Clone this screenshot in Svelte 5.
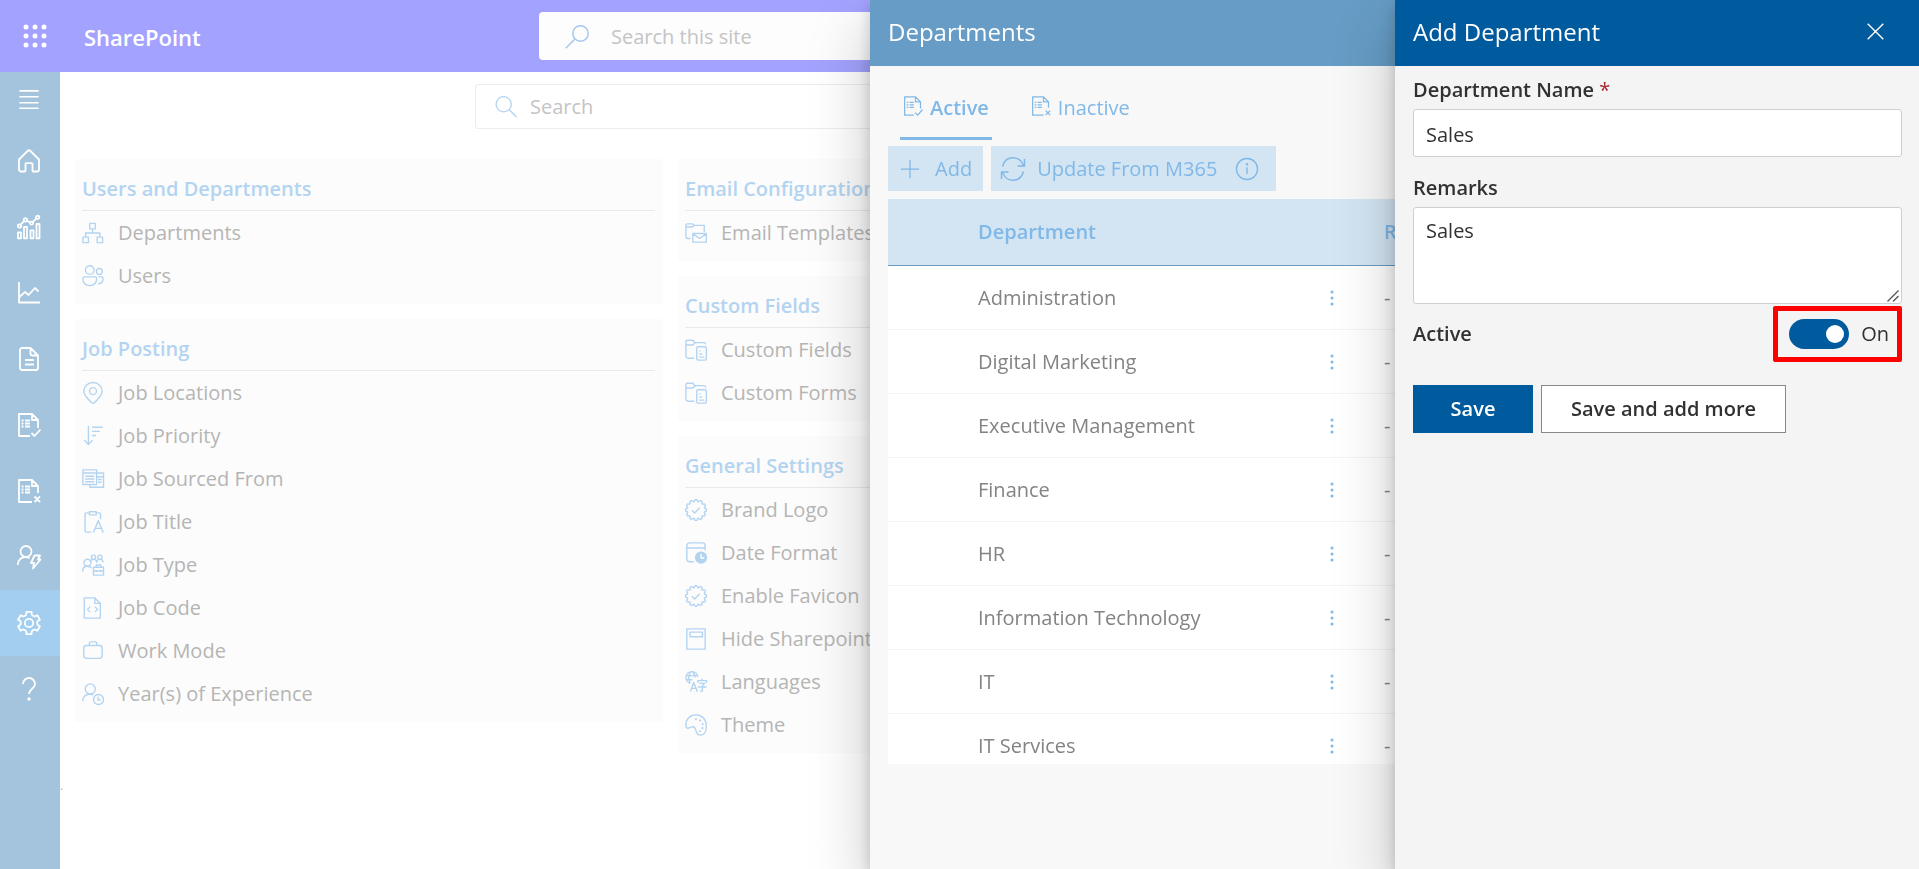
<script>
  // Closed outline through points repeated around the centre of a 24 by 24 box.
  const ring = (count, points) => {
    const out = [];
    for (let k = 0; k < count; k++) {
      for (const [radius, degrees] of points) {
        const a = ((degrees + (360 / count) * k - 90) * Math.PI) / 180;
        out.push(`${(12 + radius * Math.cos(a)).toFixed(2)} ${(12 + radius * Math.sin(a)).toFixed(2)}`);
      }
    }
    return `M${out.join('L')}Z`;
  };
  const badgeEdge = ring(12, [[11.4, -5], [11.4, 5], [9.5, 12], [9.5, 18]]);
  const gearEdge = ring(6, [[11.4, -13], [11.4, 13], [8.6, 19], [8.2, 30], [8.6, 41]]);

  const svgs = {
    menu: '<path d="M1.500 2h21M1.500 8.500h21M1.500 15h21M1.500 21h21"/>',
    home: '<path d="M2 10.500L10.600 2a2 2 0 0 1 2.800 0L22 10.500V20.500a2 2 0 0 1-2 2h-3.500a1 1 0 0 1-1-1V15a.8.8 0 0 0-.8-.8H9.300a.8.8 0 0 0-.8.8v6.500a1 1 0 0 1-1 1H4a2 2 0 0 1-2-2z"/>',
    stats: '<path d="M1 23.300v-6h3v6zM7 23.300V12h3v11.300zM13.500 23.300v-8h3v8zM19.500 23.300V9h3v14.300zM3.600 9.600l3.500-3.500M9.800 5.600l3.600 2M15.800 7l3.800-3.800"/><circle cx="2.500" cy="11" r="1.700"/><circle cx="8.400" cy="4.900" r="1.700"/><circle cx="14.600" cy="8.200" r="1.500"/><circle cx="20.700" cy="2.200" r="1.600"/>',
    line: '<path d="M2 1v20.500h21M2.500 16l5.500-5 3.500 3 6.500-7 3.500 3.500"/>',
    doc: '<path d="M5 1h8.500L21 8.500v12.500a2 2 0 0 1-2 2H5a2 2 0 0 1-2-2V3a2 2 0 0 1 2-2zM13.500 1v5.500a2 2 0 0 0 2 2H21M8 13h9M8 17.500h9"/>',
    docCheck: '<path d="M13 23H2V1h13l6 6v8M15 1v6h6M4.500 7.500h2M8 7.500h5M4.500 10.500h2M8 10.500h5M4.500 13.500h2M8 13.500h5M14.500 20l3 3 6-6.500"/>',
    docX: '<path d="M15 23H2V1h13l6 6v7M15 1v6h6M4.500 7.500h2M8 7.500h5M4.500 10.500h2M8 10.500h5M4.500 13.500h2M8 13.500h5M17.500 17.500l5.500 5.500M23 17.500L17.500 23"/>',
    bolt: '<circle cx="9" cy="6.500" r="5.500"/><path d="M.7 20c0-5 3.500-8 7.800-8 1.500 0 3 .5 4 1.200M17.500 10.500h5.500l-2 4h2.500l-7.500 9 1-5.500h-3z"/>',
    gear: `<path d="${gearEdge}"/><circle cx="12" cy="12" r="4.200"/>`,
    help: '<path d="M6 7a6 6 0 0 1 12 0c0 4.500-6 5-6 10"/><circle cx="12" cy="22" r=".8" fill="currentColor"/>',
    org: '<path d="M8.500 1.500h6v6h-6zM1 16.500h6v6H1zM16.500 16.500h6v6h-6zM11.500 7.500v4.500M4 16.500V12h15.500v4.500"/>',
    users: '<circle cx="8.500" cy="5.500" r="4.700"/><circle cx="19" cy="7" r="3.200"/><path d="M2.500 13h12a1.500 1.500 0 0 1 1.500 1.500c0 5-3 8-7.500 8S1 19.500 1 14.500A1.500 1.500 0 0 1 2.500 13zM18 13h3.500a1.500 1.500 0 0 1 1.500 1.500c0 3.500-2 6-5.500 6"/>',
    pin: '<path d="M12 23.300c-1 0-10-8-10-13.500a10 9.300 0 0 1 20 0c0 5.500-9 13.500-10 13.500z"/><circle cx="12" cy="10" r="3.800"/>',
    sort: '<path d="M7 1v20M2.500 16.500l4.500 4.800 4.500-4.800M11 2.500h11.500M11 7h8.500M11 11.500h4.500"/>',
    source: '<path d="M1 2h15v16H1zM1 5.500h15M3.500 9h10M3.500 12h10M3.500 15h10M16 5.500h7.500V21H8.500v-3M16 9.500h7M17.500 12.500h4M17.500 15.500h4"/>',
    title: '<path d="M7 2H5a1.700 1.700 0 0 0-1.700 1.700v17.600A1.700 1.700 0 0 0 5 23h5M16 2h2.500a1.700 1.700 0 0 1 1.700 1.700V9M8 .8h7.500v3.400H8zM12.500 23.500l5.300-13 5.300 13M14.500 19h6.700"/>',
    type: '<circle cx="6" cy="9.500" r="3.800"/><circle cx="12.500" cy="3.500" r="2.300"/><circle cx="19.500" cy="3.500" r="2.300"/><path d="M.7 19c0-3.500 2-5.700 5-5.700 2 0 3.500.7 4.500 2.200M9 9c.5-2 1.700-3.200 3.500-3.200S16 7 16 9c0-2 1.500-3.200 3.500-3.200S23 7 23 9M12.500 14.500h11v8.500h-11zM15.500 14.500V12h5v2.500M12.500 18.500h11M15.500 17.500v2.500M20.500 17.500v2.500"/>',
    code: '<path d="M2.500 1H14l6 6v16H2.500zM14 1v6h6M9 10.500L6 13.500l3 3M14 10.500l3 3-3 3"/>',
    case: '<rect x="2" y="6" width="20" height="14" rx="3"/><path d="M8 6V3.500A1.500 1.500 0 0 1 9.500 2h5A1.500 1.500 0 0 1 16 3.500V6"/>',
    years: '<circle cx="9" cy="6.500" r="5.500"/><path d="M.7 19.500c0-4.500 3.500-7.500 7.800-7.500 1.500 0 2.600.4 3.700 1"/><circle cx="18" cy="18" r="5.500"/><path d="M17.500 15v3.500h3"/>',
    mail: '<path d="M6 18H3a2 2 0 0 1-2-2V3.500A1.500 1.500 0 0 1 2.500 2H8l2 1.700h11V11M1 5.500h7l2-1.800M8.500 12.500H23.300v9.500H8.500zM8.500 13l7.500 5 7-5"/>',
    form: '<path d="M10 21H3.500A2.500 2.500 0 0 1 1 18.500V3a1.700 1.700 0 0 1 1.700-1.700H8.500L11 4h9.500A2 2 0 0 1 22.500 6M1 6.500h7.500L11 4"/><rect x="12.800" y="8.500" width="10.500" height="14.500" rx="1.500"/><path d="M15.500 13h1.500M15.500 16.500h3.500M15.500 19.800h5.500"/>',
    badge: `<path d="${badgeEdge}"/><path d="M7.500 12.200l3 3 5.500-5.700"/>`,
    date: '<path d="M9.500 21.500H5A3 3 0 0 1 2 18.500V4A3 3 0 0 1 5 1h14a3 3 0 0 1 3 3v5M2 6.500h20"/><circle cx="17.500" cy="17" r="6.700" fill="currentColor" stroke="none"/><path d="M17.500 13v4.500h3.500" stroke="#fff"/>',
    hide: '<path d="M2 1h20v22H2zM5.500 4.500h13.500v5H5.500z"/>',
    lang: '<path d="M6 13.500A6.500 6.500 0 1 1 14 6.500M1 5h13M1 9.500h7M5.500 13c-2-4-2-8.500 1-12M8 1c2 1.500 3 3.500 3 6M6 22.500l3.500-10 4 10M7.200 19h5M14 13v-2.500h9.500v2.500M18.500 8.500v2M15.500 13.500h6l-2.500 2.500v6h-2.500M14 17.500h9.500"/>',
    theme: '<path d="M1 13C.5 6 5.500 1 12 1c6.500 0 11.300 5 11.300 12 0 6-2.500 10-6 10-3 0-4.500-1.500-5.300-4.500-.6-3-1.500-5-4-4.500C5.500 14.500 4 16 2.500 15.500 1.500 15.200 1 14.500 1 13z"/><g fill="currentColor" stroke="none"><circle cx="12" cy="5.500" r="1.200"/><circle cx="16.500" cy="7" r="1.200"/><circle cx="19.300" cy="11" r="1.200"/><circle cx="19" cy="15.500" r="1.200"/><circle cx="16.300" cy="18.800" r="1.200"/></g>',
    search: '<circle cx="9.500" cy="9" r="8.300"/><path d="M15.500 15l8 8"/>',
    searchLeft: '<circle cx="15.500" cy="8.500" r="7.700"/><path d="M10 14L.7 23.300"/>',
    plus: '<path d="M12 1v22M1 12h22"/>',
    sync: '<path d="M1.500 9.500C3 4 7 .8 12 .8c4 0 7.500 2 9.500 5.700l1 2M23.500 2v7h-7M22.500 14.500c-1.500 5.500-5.500 8.700-10.500 8.700-4 0-7.500-2-9.500-5.700l-1-2M.5 22v-7h7"/>',
    info: '<circle cx="12" cy="12" r="11.500"/><path d="M12 10v7.500"/><circle cx="12" cy="6.800" r=".6" fill="currentColor"/>',
    close: '<path d="M1 1l22 22M23 1L1 23"/>',
  };

  const nav = [
    ['home', 'Home'], ['stats', 'Dashboard'], ['line', 'Reports'], ['doc', 'Documents'],
    ['docCheck', 'Active jobs'], ['docX', 'Inactive jobs'], ['bolt', 'Candidates'],
    ['gear', 'Settings'], ['help', 'Help'],
  ];

  const columns = [
    [
      { title: 'Users and Departments', items: [['org', 'Departments'], ['users', 'Users']] },
      {
        title: 'Job Posting',
        items: [
          ['pin', 'Job Locations'], ['sort', 'Job Priority'], ['source', 'Job Sourced From'],
          ['title', 'Job Title'], ['type', 'Job Type'], ['code', 'Job Code'],
          ['case', 'Work Mode'], ['years', 'Year(s) of Experience'],
        ],
      },
    ],
    [
      { title: 'Email Configuration', items: [['mail', 'Email Templates']] },
      { title: 'Custom Fields', items: [['form', 'Custom Fields'], ['form', 'Custom Forms']] },
      {
        title: 'General Settings',
        items: [
          ['badge', 'Brand Logo'], ['date', 'Date Format'], ['badge', 'Enable Favicon'],
          ['hide', 'Hide Sharepoint'], ['lang', 'Languages'], ['theme', 'Theme'],
        ],
      },
    ],
  ];

  const departments = [
    'Administration', 'Digital Marketing', 'Executive Management', 'Finance', 'HR',
    'Information Technology', 'IT', 'IT Services',
  ];

  let name = $state('Sales');
  let remarks = $state('Sales');
  let active = $state(true);
</script>

{#snippet icon(id, cls = '')}
  <svg class="icon {cls}" viewBox="0 0 24 24" aria-hidden="true">{@html svgs[id]}</svg>
{/snippet}

<div class="shell">
  <header class="suite">
    <button class="waffle" aria-label="App launcher">
      <svg viewBox="0 0 24 24" aria-hidden="true">
        {#each [3, 12, 21] as cy}
          {#each [3, 12, 21] as cx}<circle {cx} {cy} r="2.500" />{/each}
        {/each}
      </svg>
    </button>
    <a class="brand" href="#home">SharePoint</a>
    <label class="site-search">
      {@render icon('searchLeft', 'large')}
      <input type="search" placeholder="Search this site" aria-label="Search this site" />
    </label>
  </header>

  <div class="workspace">
    <nav>
      <button class="burger" aria-label="Menu">{@render icon('menu')}</button>
      {#each nav as [id, label]}
        <a href="#{id}" aria-label={label} class:selected={id === 'gear'}>{@render icon(id, 'large')}</a>
      {/each}
    </nav>

    <main>
      <label class="search">
        {@render icon('search')}
        <input type="search" placeholder="Search" aria-label="Search" />
      </label>
      <div class="columns">
        {#each columns as cards}
          <div class="column">
            {#each cards as card}
              <section class="card">
                <h2>{card.title}</h2>
                {#each card.items as [id, label]}
                  <a href="#{id}">{@render icon(id)}{label}</a>
                {/each}
              </section>
            {/each}
          </div>
        {/each}
      </div>
      <footer>.</footer>
    </main>
  </div>
</div>

<section class="panel departments" aria-label="Departments">
  <div class="panel-head"><h1>Departments</h1></div>
  <div class="list">
    <div class="tabs" role="tablist">
      <button role="tab" aria-selected="true" class="current">{@render icon('docCheck', 'small')}Active</button>
      <button role="tab" aria-selected="false">{@render icon('docX', 'small')}Inactive</button>
    </div>
    <div class="commands">
      <button class="add">{@render icon('plus', 'small')}Add</button>
      <button class="update">{@render icon('sync', 'large')}Update From M365{@render icon('info', 'note')}</button>
    </div>
    <div class="scroller">
      <table>
        <thead>
          <tr><th class="check"></th><th class="name">Department</th><th class="more"></th><th>Remarks</th></tr>
        </thead>
        <tbody>
          {#each departments as department}
            <tr>
              <td></td>
              <td>{department}</td>
              <td>
                <button class="dots" aria-label="More actions">
                  <svg viewBox="0 0 4 16" aria-hidden="true"><circle cx="2" cy="2" r="1.500" /><circle cx="2" cy="8" r="1.500" /><circle cx="2" cy="14" r="1.500" /></svg>
                </button>
              </td>
              <td>-</td>
            </tr>
          {/each}
        </tbody>
      </table>
    </div>
  </div>
</section>

<section class="panel editor" aria-label="Add Department">
  <div class="panel-head">
    <h1>Add Department</h1>
    <button class="close" aria-label="Close">{@render icon('close', 'tiny')}</button>
  </div>
  <form onsubmit={(e) => e.preventDefault()}>
    <div class="field">
      <label for="name">Department Name <span>*</span></label>
      <input id="name" type="text" bind:value={name} />
    </div>
    <div class="field remarks">
      <label for="remarks">Remarks</label>
      <div class="area">
        <textarea id="remarks" bind:value={remarks}></textarea>
        <svg viewBox="0 0 12 12" aria-hidden="true"><path d="M.5 11.500l11-11M6 11.500L11.500 6" /></svg>
      </div>
    </div>
    <div class="status">
      <label for="active">Active</label>
      <div class="switch">
        <input id="active" type="checkbox" role="switch" bind:checked={active} />
        <span>{active ? 'On' : 'Off'}</span>
      </div>
    </div>
    <div class="actions">
      <button class="primary" type="submit">Save</button>
      <button class="secondary" type="button">Save and add more</button>
    </div>
  </form>
</section>

<style>
  :global(body) {
    overflow: hidden;
    background: #fff;
    font: 20px/24px "Segoe UI", "Open Sans", sans-serif;
  }
  * { box-sizing: border-box; }
  button, input, textarea { font: inherit; color: inherit; }
  button { border: 0; padding: 0; background: none; cursor: pointer; }
  a { color: inherit; text-decoration: none; }
  h1, h2 { margin: 0; }

  .icon {
    width: 22px;
    height: 22px;
    flex: none;
    fill: none;
    stroke: currentColor;
    stroke-width: 1.5;
    stroke-linejoin: round;
    overflow: visible;
  }
  .icon.large { width: 24px; height: 24px; }
  .icon.small { width: 20px; height: 20px; }
  .icon.tiny { width: 17px; height: 17px; stroke-width: 2; }

  .shell { display: flex; flex-direction: column; height: 100vh; }
  .suite {
    display: flex;
    align-items: center;
    height: 72px;
    flex: none;
    background: #a3a3ff;
    color: #fff;
  }
  .waffle { width: 70px; height: 72px; }
  .waffle svg { display: block; width: 24px; height: 24px; margin: 0 auto; fill: #fff; }
  .brand { width: 469px; padding: 2px 0 0 14px; font-size: 22px; font-weight: 600; }
  .site-search {
    display: flex;
    align-items: center;
    gap: 22px;
    flex: 0 1 842px;
    height: 48px;
    padding: 2px 26px 0;
    border-radius: 4px;
    background: #fdfdfd;
    color: #a3c8ec;
  }
  .site-search input, .search input {
    flex: 1;
    min-width: 0;
    border: 0;
    outline: 0;
    padding: 0;
    background: none;
    color: #b5b5b4;
  }
  input::placeholder { color: #c4c4c4; opacity: 1; }

  .workspace { display: flex; flex: 1; min-height: 0; }
  nav { display: flex; flex-direction: column; width: 60px; flex: none; background: #a3c4dc; color: #fff; }
  nav a, .burger { display: flex; align-items: center; justify-content: center; height: 66px; padding: 0 2px 1px 0; }
  .burger { height: 56px; }
  nav .icon { stroke-width: 1.8; }
  nav .selected { background: #a3cef0; }

  main { flex: 1; min-width: 0; padding: 12px 50px 0 15px; }
  .search {
    display: flex;
    align-items: center;
    gap: 13px;
    width: 1030px;
    height: 45px;
    margin: 0 0 30px 400px;
    padding: 0 19px;
    border: 1px solid #ececec;
    border-radius: 3px;
    color: #b3d4f1;
  }
  .columns { display: grid; grid-template-columns: repeat(3, 1fr); gap: 15px; align-items: start; }
  .column { display: grid; gap: 15px; }
  .card { padding: 0 8px 7px 7px; background: #fcfcfc; color: #b5b5b4; }
  .card h2 {
    height: 52px;
    padding-top: 17px;
    border-bottom: 1px solid #e9e9e9;
    color: #b3d4f1;
    font-size: 20px;
    line-height: 26px;
    font-weight: 600;
  }
  .card a { display: flex; align-items: center; gap: 14px; height: 43px; color: #b5b5b4; }
  .card .icon { color: #b3d4f1; }
  footer { margin: 21px 0 0 -15px; color: #b5b5b4; font-size: 12px; }

  .panel {
    position: fixed;
    top: 0;
    right: 0;
    bottom: 0;
    max-width: 100vw;
    box-shadow: 0 26px 58px rgba(0, 0, 0, 0.22), 0 5px 14px rgba(0, 0, 0, 0.18);
  }
  .panel-head { display: flex; align-items: center; justify-content: space-between; height: 66px; padding: 0 35px 3px 18px; color: #fff; }
  .panel-head h1 { font-size: 24px; line-height: 32px; font-weight: 400; }
  .departments { width: 1049px; background: #f8f8f8; color: #848383; }
  .departments .panel-head { background: #669cc5; }
  .list { padding: 17px 18px 0; color: #80b8e8; }
  .tabs { display: flex; gap: 36px; padding-left: 12px; height: 57px; }
  .tabs button { display: flex; align-items: center; gap: 7px; padding: 0 3px 4px; border-bottom: 3px solid transparent; }
  .tabs .icon { height: 22px; margin-bottom: 4px; }
  .tabs .current { border-color: #80b8e8; font-weight: 600; }
  .commands { display: flex; gap: 8px; margin: 6px 0 8px; }
  .commands button { display: flex; align-items: center; height: 45px; gap: 12px; padding: 0 10px; background: #d3e5f3; }
  .commands .add { gap: 15px; padding: 0 11px 0 12px; }
  .commands .note { margin: 0 8px 0 7px; }
  .scroller { height: 565px; overflow: hidden; background: #fff; }
  table { width: 100%; border-collapse: separate; border-spacing: 0; table-layout: fixed; }
  th, td { height: 64px; padding: 0 0 0 2px; border-bottom: 1px solid #f3f3f3; text-align: left; color: #848383; }
  th { height: 67px; background: #d3e5f3; border-bottom-color: #669cc5; color: #80b8e8; font-weight: 600; }
  .check { width: 88px; }
  .name { width: 348px; }
  .more { width: 58px; }
  .dots { display: block; width: 12px; height: 16px; color: #80b8e8; }
  .dots svg { display: block; width: 4px; height: 16px; margin: 0 auto; fill: currentColor; }

  .editor { width: 524px; background: #f4f4f4; color: #323130; }
  .editor .panel-head { background: #005a9e; }
  .close { display: flex; align-items: center; width: 17px; height: 24px; }
  form { padding: 12px 17px 0 18px; }
  .field { margin-bottom: 19px; }
  .field.remarks { margin-bottom: 2px; }
  .field label, .status label { display: block; font-weight: 600; }
  .field label { margin-bottom: 7px; }
  .field label span { color: #a4262c; font-weight: 400; }
  .field input, .field textarea {
    display: block;
    width: 100%;
    height: 48px;
    padding: 2px 12px 0;
    border: 1px solid #cfcfcf;
    border-radius: 3px;
    outline: 0;
    background: #fff;
  }
  .field textarea { height: 97px; padding: 11px 12px; resize: none; }
  .area { position: relative; }
  .area svg { position: absolute; right: 3px; bottom: 2px; width: 12px; height: 12px; fill: none; stroke: #555; stroke-width: 1.3; }
  .status { display: flex; align-items: center; justify-content: space-between; }
  .switch { display: flex; align-items: center; gap: 12px; height: 56px; padding: 0 8px 0 11px; border: 5px solid #f00; border-radius: 2px; }
  .switch input {
    appearance: none;
    display: flex;
    align-items: center;
    justify-content: flex-end;
    width: 60px;
    height: 30px;
    margin: 0;
    padding: 0 5px;
    border-radius: 15px;
    background: #005a9e;
  }
  .switch input:not(:checked) { justify-content: flex-start; background: #8a8886; }
  .switch input::before { content: ""; width: 18px; height: 18px; border-radius: 50%; background: #fff; }
  .actions { display: flex; gap: 8px; margin-top: 23px; }
  .actions button { height: 48px; font-weight: 600; }
  .primary { min-width: 120px; background: #005a9e; color: #fff; }
  .secondary { min-width: 245px; padding: 0 24px; border: 1px solid #8a8886; background: #fff; }
</style>
